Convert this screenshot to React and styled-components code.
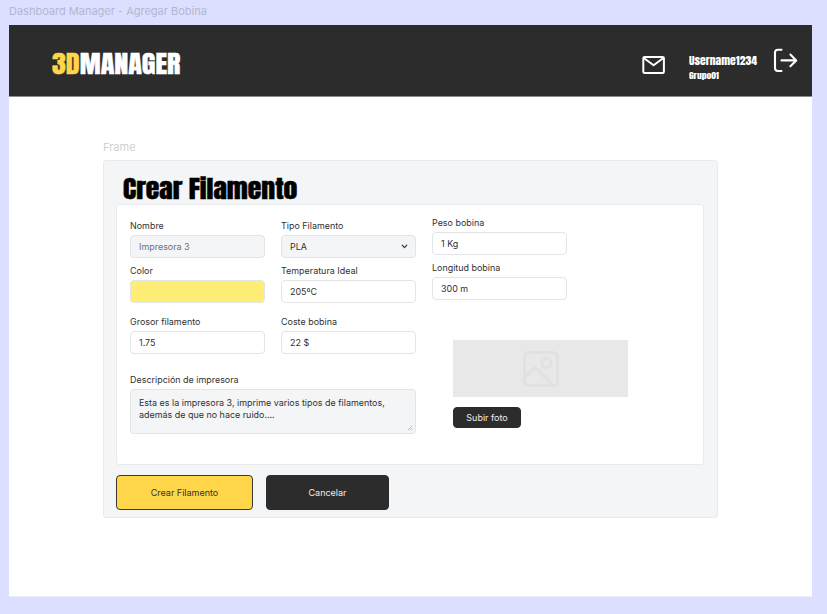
import React from "react";
import styled, { createGlobalStyle } from "styled-components";

const GlobalStyle = createGlobalStyle`
  *, *::before, *::after { box-sizing: border-box; }
  body { margin: 0; background: #dcdfff; font-family: Inter, sans-serif; }
  button, input, textarea { font: inherit; letter-spacing: inherit; margin: 0; }
`;

const Canvas = styled.div`
  width: 827px;
  height: 614px;
  padding: 0 15px 0 9px;
  overflow: hidden;
  background: #dcdfff;
`;

const FrameLabel = styled.div`
  height: ${(p) => p.$height}px;
  padding-top: ${(p) => p.$top}px;
  color: ${(p) => p.$color};
  font-size: 11px;
  line-height: 14px;
  letter-spacing: ${(p) => p.$spacing || 0}px;
  white-space: nowrap;
`;

const Screen = styled.div`
  height: 572px;
  background: #fff;
  border-bottom: 1px solid #eceefe;
`;

const Header = styled.header`
  display: flex;
  height: 72px;
  padding-left: 43px;
  background: #2c2c2c;
  border-bottom: 1px solid #8c8c8c;
`;

const Impact = styled.span`
  display: block;
  width: max-content;
  font-family: Impact, Anton, "Open Sans", sans-serif;
  font-weight: 400;
  font-size: ${(p) => p.$size}px;
  line-height: ${(p) => p.$line}px;
  color: ${(p) => p.$color || "#fff"};
  -webkit-text-stroke: ${(p) => p.$stroke || 0}px;
  transform: scaleX(${(p) => p.$scale || 1});
  transform-origin: left center;
  white-space: nowrap;
`;

const Brand = styled.div`
  width: 590px;
  padding-top: 20px;
`;

const Accent = styled.span`
  color: #ffd549;
`;

const MailSlot = styled.div`
  width: 47px;
  padding-top: 31px;
`;

const User = styled.div`
  width: 84px;
  padding-top: 28px;
`;

const ExitSlot = styled.div`
  padding-top: 23px;
`;

const Glyph = styled.svg`
  display: block;
  fill: none;
  stroke: currentColor;
  stroke-linecap: round;
  stroke-linejoin: round;
  color: ${(p) => p.$color || "#fff"};
`;

const Main = styled.main`
  width: 615px;
  margin: 43px 0 0 94px;
`;

const Panel = styled.section`
  height: 358px;
  padding: 13px 13px 0 12px;
  background: #f4f5f7;
  border: 1px solid #e9eaed;
  border-radius: 3px;
`;

const Title = styled.h1`
  height: 30px;
  margin: 0;
  padding-left: 7px;
`;

const Card = styled.form`
  display: flex;
  gap: 16px;
  height: 261px;
  padding: 14px 0 0 13px;
  background: #fff;
  border: 1px solid #e9eaed;
  border-radius: 3px;
`;

const Details = styled.div`
  display: grid;
  grid-template-columns: 135px 135px;
  grid-template-rows: 45px 51px 58px 60px;
  column-gap: 16px;
  align-content: start;
`;

const Side = styled.div`
  width: 196px;
  margin-top: -3px;
`;

const Field = styled.label`
  display: block;
  height: ${(p) => (p.$fixed ? "45px" : "auto")};
  grid-column: ${(p) => (p.$wide ? "1 / -1" : "auto")};
  color: #303030;
  font-size: 8.95px;
`;

const Caption = styled.span`
  display: block;
  height: 16px;
  line-height: 13px;
  white-space: nowrap;
`;

const Input = styled.input`
  display: block;
  width: 135px;
  height: 23px;
  padding: 0 8px;
  outline: 0;
  color: ${(p) => (p.$muted ? "#687080" : "#303030")};
  background: ${(p) => p.$fill || "#fff"};
  border: 1px solid #e3e4e6;
  border-radius: 4px;
`;

const SelectBox = styled.span`
  display: flex;
  align-items: center;
  justify-content: space-between;
  width: 135px;
  height: 23px;
  padding: 0 7px 0 8px;
  background: #f4f5f7;
  border: 1px solid #e3e4e6;
  border-radius: 4px;
`;

const AreaBox = styled.span`
  display: flex;
  align-items: flex-end;
  width: 286px;
  height: 45px;
  padding-right: 2px;
  padding-bottom: 2px;
  background: #f4f5f7;
  border: 1px solid #e3e4e6;
  border-radius: 4px;
`;

const Area = styled.textarea`
  flex: 1;
  height: 41px;
  padding: 7px 0 0 8px;
  resize: none;
  overflow: hidden;
  outline: 0;
  border: 0;
  background: transparent;
  color: #303030;
  line-height: 12.2px;
`;

const Upload = styled.div`
  padding: 34px 0 0 21px;
`;

const Preview = styled.div`
  display: flex;
  justify-content: center;
  align-items: center;
  width: 175px;
  height: 57px;
  margin-bottom: 10px;
  background: #e8e8e8;
`;

const Button = styled.button`
  display: block;
  width: ${(p) => p.$width}px;
  height: ${(p) => p.$height}px;
  padding: 0;
  font-size: 9px;
  color: ${(p) => (p.$primary ? "#333" : "#eee")};
  background: ${(p) => (p.$primary ? "#ffd549" : "#2c2c2c")};
  border: 1px solid ${(p) => (p.$primary ? "#3b382f" : "#2c2c2c")};
  border-radius: 4px;
`;

const Actions = styled.div`
  display: flex;
  gap: 13px;
  padding-top: 10px;
`;

function TextField({ label, value, fill, muted, fixed }) {
  return (
    <Field $fixed={fixed}>
      <Caption>{label}</Caption>
      <Input defaultValue={value} $fill={fill} $muted={muted} />
    </Field>
  );
}

export default function App() {
  return (
    <>
      <GlobalStyle />
      <Canvas>
        <FrameLabel $height={25} $top={4} $color="#b4b6d2">
          Dashboard Manager - Agregar Bobina
        </FrameLabel>
        <Screen>
          <Header>
            <Brand>
              <Impact $size={24.3} $line={38} $scale={1.155} $stroke={0.4}>
                <Accent>3D</Accent>MANAGER
              </Impact>
            </Brand>
            <MailSlot>
              <Glyph width="24" height="19" viewBox="0 0 24 19" strokeWidth="2">
                <rect x="1.3" y="1" width="20.6" height="16" rx="1.3" />
                <path d="M1.8 2 11.6 9.2 21.4 2" />
              </Glyph>
            </MailSlot>
            <User>
              <Impact $size={10.8} $line={16} $scale={1.08}>Username1234</Impact>
              <Impact $size={8} $line={14} $scale={1.19}>Grupo01</Impact>
            </User>
            <ExitSlot>
              <Glyph width="26" height="25" viewBox="0 0 26 25" strokeWidth="2.1">
                <path d="M8.5 1.8H5Q2 1.8 2 4.8V20Q2 23 5 23H8.5M8.5 12.4H23M17.4 6.6 23.2 12.4 17.4 18.2" />
              </Glyph>
            </ExitSlot>
          </Header>
          <Main>
            <FrameLabel $height={20} $top={0} $color="#cfcfcf">Frame</FrameLabel>
            <Panel>
              <Title>
                <Impact $size={24.3} $line={30} $color="#000" $scale={1.14} $stroke={0.5}>
                  Crear Filamento
                </Impact>
              </Title>
              <Card>
                <Details>
                  <TextField label="Nombre" value="Impresora 3" fill="#f4f5f7" muted />
                  <Field as="div">
                    <Caption>Tipo Filamento</Caption>
                    <SelectBox>
                      PLA
                      <Glyph $color="#303030" width="7" height="5" viewBox="0 0 7 5" strokeWidth="1.2">
                        <path d="M1.2 1.2 3.5 3.6 5.8 1.2" />
                      </Glyph>
                    </SelectBox>
                  </Field>
                  <TextField label="Color" value="" fill="#ffee75" />
                  <TextField label="Temperatura Ideal" value="205ºC" />
                  <TextField label="Grosor filamento" value="1.75" />
                  <TextField label="Coste bobina" value="22 $" />
                  <Field $wide>
                    <Caption>Descripción de impresora</Caption>
                    <AreaBox>
                      <Area
                        spellCheck={false}
                        defaultValue={"Esta es la impresora 3, imprime varios tipos de filamentos,\nademás de que no hace ruido...."}
                      />
                      <Glyph $color="#aaa" width="6" height="6" viewBox="0 0 6 6" strokeWidth="0.8">
                        <path d="M1 5 5 1M3.5 5 5 3.5" />
                      </Glyph>
                    </AreaBox>
                  </Field>
                </Details>
                <Side>
                  <TextField label="Peso bobina" value="1 Kg" fixed />
                  <TextField label="Longitud bobina" value="300 m" fixed />
                  <Upload>
                    <Preview>
                      <Glyph $color="#e1e1e1" width="36" height="36" viewBox="0 0 36 36" strokeWidth="2.8">
                        <rect x="1.5" y="1.5" width="33" height="33" rx="4" />
                        <circle cx="23.5" cy="12" r="4.7" />
                        <path d="M2 26.5 12 16.5 29.5 34" />
                      </Glyph>
                    </Preview>
                    <Button type="button" $width={68} $height={21}>Subir foto</Button>
                  </Upload>
                </Side>
              </Card>
              <Actions>
                <Button type="button" $primary $width={137} $height={35}>Crear Filamento</Button>
                <Button type="button" $width={123} $height={35}>Cancelar</Button>
              </Actions>
            </Panel>
          </Main>
        </Screen>
      </Canvas>
    </>
  );
}
